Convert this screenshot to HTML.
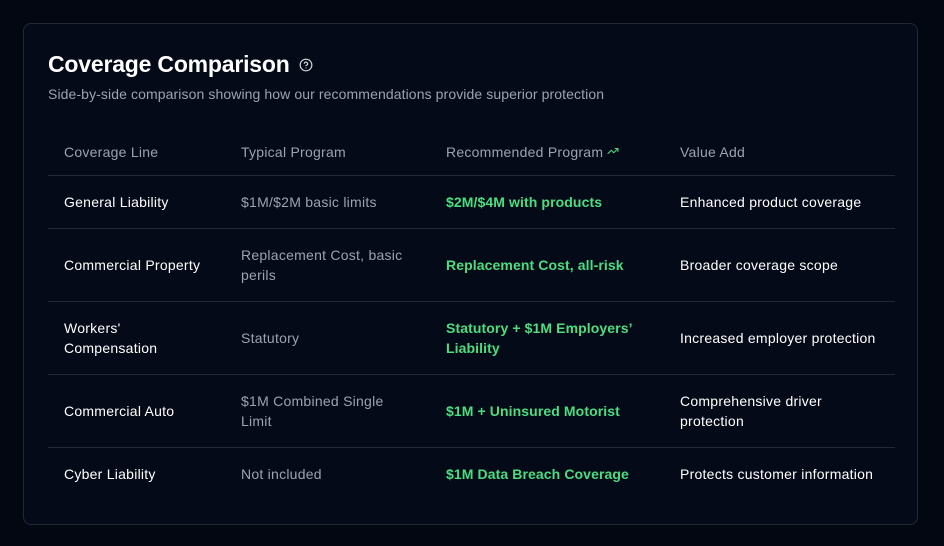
<!DOCTYPE html>
<html><head><style>
body{margin:0;background:#030712;font-family:"Liberation Sans",sans-serif;width:944px;height:546px;overflow:hidden}
.card{position:absolute;left:23px;top:23px;width:895px;height:502px;border:1px solid #1f2937;border-radius:8px;background:#050a18;box-sizing:border-box}
h1{position:absolute;left:24px;top:27px;margin:0;font-size:23px;font-weight:bold;color:#fff;letter-spacing:-0.2px;display:flex;align-items:center}
.sub{position:absolute;left:24px;top:62px;font-size:14px;color:#9ca3af;letter-spacing:0.1px}
table{position:absolute;left:24px;top:104px;width:847px;border-collapse:collapse;font-size:14px;letter-spacing:0.25px}
td,th{padding:0 16px;text-align:left;vertical-align:middle;line-height:20px}
th{font-weight:normal;color:#9ca3af;height:47px;border-bottom:1px solid #1f2937}
td{height:52px;border-bottom:1px solid #1f2937}
tr.t td{height:72px}
tr:last-child td{border-bottom:none}
td.a{color:#fff;font-weight:500}
td.b{color:#9ca3af}
td.c{color:#4ade80;font-weight:bold;letter-spacing:0.1px}
td.d{color:#fff}
</style></head><body>
<div class="card">
<h1>Coverage Comparison <svg style="margin-left:9px" width="14" height="14" viewBox="0 0 24 24" fill="none" stroke="#d1d5db" stroke-width="2" stroke-linecap="round"><circle cx="12" cy="12" r="10"/><path d="M9.1 9a3 3 0 0 1 5.8 1c0 2-3 3-3 3"/><path d="M12 17h.01"/></svg></h1>
<div class="sub">Side-by-side comparison showing how our recommendations provide superior protection</div>
<table>
<colgroup><col style="width:177px"><col style="width:205px"><col style="width:234px"><col></colgroup>
<tr><th>Coverage Line</th><th>Typical Program</th><th>Recommended Program <svg width="12" height="12" viewBox="0 0 24 24" fill="none" stroke="#4ade80" stroke-width="2" stroke-linecap="round" stroke-linejoin="round"><path d="M22 7l-8.5 8.5-5-5L2 17"/><path d="M16 7h6v6"/></svg></th><th>Value Add</th></tr>
<tr><td class="a">General Liability</td><td class="b">$1M/$2M basic limits</td><td class="c">$2M/$4M with products</td><td class="d">Enhanced product coverage</td></tr>
<tr class="t"><td class="a">Commercial Property</td><td class="b">Replacement Cost, basic perils</td><td class="c">Replacement Cost, all-risk</td><td class="d">Broader coverage scope</td></tr>
<tr class="t"><td class="a">Workers'<br>Compensation</td><td class="b">Statutory</td><td class="c">Statutory + $1M Employers’ Liability</td><td class="d">Increased employer protection</td></tr>
<tr class="t"><td class="a">Commercial Auto</td><td class="b">$1M Combined Single Limit</td><td class="c">$1M + Uninsured Motorist</td><td class="d">Comprehensive driver protection</td></tr>
<tr><td class="a">Cyber Liability</td><td class="b">Not included</td><td class="c">$1M Data Breach Coverage</td><td class="d">Protects customer information</td></tr>
</table>
</div>
</body></html>
